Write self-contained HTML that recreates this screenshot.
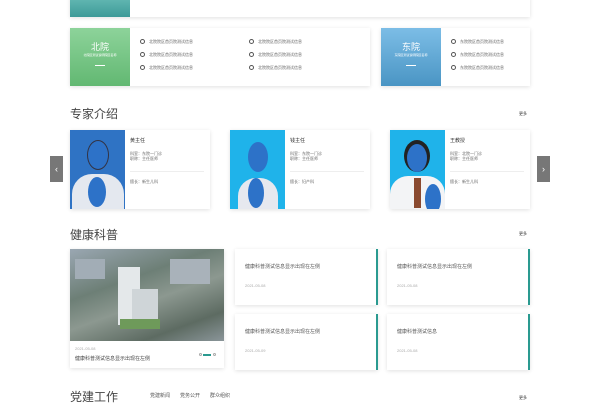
<!DOCTYPE html>
<html><head><meta charset="utf-8"><style>
*{margin:0;padding:0;box-sizing:border-box}
body{width:600px;height:400px;overflow:hidden;background:#fff;font-family:"Liberation Sans","Noto Sans CJK SC",sans-serif;position:relative;color:#333}
.a{position:absolute}
.card{position:absolute;background:#fff;box-shadow:0 1px 4px rgba(0,0,0,.12)}
.t{font-size:4px;color:#666;line-height:5px}
.li{position:absolute;font-size:4px;color:#666}
.li:before{content:"";display:inline-block;width:3px;height:3px;border:1px solid #555;border-radius:50%;margin-right:4px;vertical-align:middle}
h2{position:absolute;font-size:12px;font-weight:normal;color:#444}
.more{position:absolute;font-size:4px;color:#333}
.nc{position:absolute;background:#fff;box-shadow:0 1px 4px rgba(0,0,0,.12);border-right:2px solid #2a9a90}
.nc .x{position:absolute;left:10px;top:14px;font-size:5px;color:#555}
.nc .d{position:absolute;left:10px;top:34px;font-size:4px;color:#aaa}
</style></head><body>
<div class="card" style="left:70px;top:-4px;width:460px;height:21px"></div>
<div class="a" style="left:70px;top:0;width:60px;height:17px;background:linear-gradient(#5fb5b0,#3d9a98)"></div>

<div class="card" style="left:70px;top:28px;width:300px;height:58px"></div>
<div class="a" style="left:70px;top:28px;width:60px;height:58px;background:linear-gradient(#8dd39a,#62b872);color:#fff;text-align:center">
<div style="font-size:9px;margin-top:12px">北院</div><div style="font-size:3px">北院区测试说明院区名称</div><div style="width:10px;height:1px;background:#fff;margin:8px auto 0"></div></div>
<div class="li" style="left:140px;top:39px">北院院区首页院测试信息</div>
<div class="li" style="left:140px;top:52px">北院院区首页院测试信息</div>
<div class="li" style="left:140px;top:65px">北院院区首页院测试信息</div>
<div class="li" style="left:249px;top:39px">北院院区首页院测试信息</div>
<div class="li" style="left:249px;top:52px">北院院区首页院测试信息</div>
<div class="li" style="left:249px;top:65px">北院院区首页院测试信息</div>
<div class="card" style="left:381px;top:28px;width:149px;height:58px"></div>
<div class="a" style="left:381px;top:28px;width:60px;height:58px;background:linear-gradient(#7cbde6,#4a95c4);color:#fff;text-align:center">
<div style="font-size:9px;margin-top:12px">东院</div><div style="font-size:3px">东院区测试说明院区名称</div><div style="width:10px;height:1px;background:#fff;margin:8px auto 0"></div></div>
<div class="li" style="left:451px;top:39px">东院院区首页院测试信息</div>
<div class="li" style="left:451px;top:52px">东院院区首页院测试信息</div>
<div class="li" style="left:451px;top:65px">东院院区首页院测试信息</div>

<h2 style="left:70px;top:105px">专家介绍</h2><div class="more" style="left:519px;top:111px">更多</div>
<div class="a" style="left:50px;top:156px;width:13px;height:26px;background:#777;color:#fff;font-size:9px;text-align:center;line-height:26px">‹</div>
<div class="a" style="left:537px;top:156px;width:13px;height:26px;background:#777;color:#fff;font-size:9px;text-align:center;line-height:26px">›</div>

<div class="card" style="left:70px;top:130px;width:140px;height:79px"></div>
<div class="a" style="left:70px;top:130px;width:55px;height:79px;background:#2f73c4;overflow:hidden">
<div class="a" style="left:2px;top:44px;width:52px;height:40px;background:#e4e8ef;border-radius:20px 20px 0 0"></div>
<div class="a" style="left:17px;top:10px;width:22px;height:30px;background:#2d72c8;border-radius:50%;border:1px solid #334"></div>
<div class="a" style="left:18px;top:47px;width:18px;height:30px;background:#2d72c8;border-radius:50%"></div></div>
<div class="a" style="left:130px;top:137px;font-size:5px">黄主任</div>
<div class="a t" style="left:130px;top:151px">科室：东院一门诊<br>职称：主任医师</div>
<div class="a" style="left:130px;top:171px;width:74px;height:1px;background:#eee"></div>
<div class="a t" style="left:130px;top:179px">擅长：新生儿科</div>

<div class="card" style="left:230px;top:130px;width:140px;height:79px"></div>
<div class="a" style="left:230px;top:130px;width:55px;height:79px;background:#1fb3ea;overflow:hidden">
<div class="a" style="left:8px;top:48px;width:40px;height:40px;background:#e6e8ef;border-radius:18px 18px 0 0"></div>
<div class="a" style="left:18px;top:12px;width:20px;height:30px;background:#2d72c8;border-radius:50%"></div>
<div class="a" style="left:18px;top:48px;width:16px;height:30px;background:#2d72c8;border-radius:50%"></div></div>
<div class="a" style="left:290px;top:137px;font-size:5px">钱主任</div>
<div class="a t" style="left:290px;top:151px">科室：东院一门诊<br>职称：主任医师</div>
<div class="a" style="left:290px;top:171px;width:74px;height:1px;background:#eee"></div>
<div class="a t" style="left:290px;top:179px">擅长：妇产科</div>

<div class="card" style="left:390px;top:130px;width:140px;height:79px"></div>
<div class="a" style="left:390px;top:130px;width:55px;height:79px;background:#1fb3ea;overflow:hidden">
<div class="a" style="left:0;top:46px;width:55px;height:40px;background:#f3f4f6;border-radius:18px 18px 0 0"></div>
<div class="a" style="left:24px;top:48px;width:7px;height:30px;background:#8a4a30"></div>
<div class="a" style="left:14px;top:10px;width:26px;height:32px;background:#222;border-radius:50%"></div>
<div class="a" style="left:17px;top:14px;width:20px;height:28px;background:#2d72c8;border-radius:50%"></div>
<div class="a" style="left:35px;top:54px;width:16px;height:30px;background:#2d72c8;border-radius:50%"></div></div>
<div class="a" style="left:450px;top:137px;font-size:5px">王教授</div>
<div class="a t" style="left:450px;top:151px">科室：北院一门诊<br>职称：主任医师</div>
<div class="a" style="left:450px;top:171px;width:74px;height:1px;background:#eee"></div>
<div class="a t" style="left:450px;top:179px">擅长：新生儿科</div>

<h2 style="left:70px;top:226px">健康科普</h2><div class="more" style="left:519px;top:231px">更多</div>
<div class="card" style="left:70px;top:249px;width:154px;height:119px"></div>
<div class="a" style="left:70px;top:249px;width:154px;height:92px;background:linear-gradient(160deg,#9aa7b2,#6d7f76 35%,#8c9890 55%,#5d6b62 80%,#8a9599);overflow:hidden">
<div class="a" style="left:48px;top:18px;width:22px;height:58px;background:#e4e8ea"></div>
<div class="a" style="left:62px;top:40px;width:26px;height:30px;background:#cfd5d8"></div>
<div class="a" style="left:50px;top:70px;width:40px;height:10px;background:#6e9a5a"></div>
<div class="a" style="left:100px;top:10px;width:40px;height:25px;background:#a9b2ba"></div>
<div class="a" style="left:5px;top:10px;width:30px;height:20px;background:#a2adb6"></div></div>
<div class="a" style="left:75px;top:346px;font-size:4px;color:#aaa">2021-05-08</div>
<div class="a" style="left:75px;top:355px;font-size:5px;color:#444">健康科普测试信息显示出现在左侧</div>
<div class="a" style="left:199px;top:353px;width:3px;height:3px;border:1px solid #aaa;border-radius:50%"></div>
<div class="a" style="left:203px;top:354px;width:8px;height:2px;background:#2a9a90"></div>
<div class="a" style="left:213px;top:353px;width:3px;height:3px;border:1px solid #aaa;border-radius:50%"></div>

<div class="nc" style="left:235px;top:249px;width:143px;height:56px"><div class="x">健康科普测试信息显示出现在左侧</div><div class="d">2021-05-08</div></div>
<div class="nc" style="left:387px;top:249px;width:143px;height:56px"><div class="x">健康科普测试信息显示出现在左侧</div><div class="d">2021-05-08</div></div>
<div class="nc" style="left:235px;top:314px;width:143px;height:56px"><div class="x">健康科普测试信息显示出现在左侧</div><div class="d">2021-05-09</div></div>
<div class="nc" style="left:387px;top:314px;width:143px;height:56px"><div class="x">健康科普测试信息</div><div class="d">2021-05-08</div></div>

<h2 style="left:70px;top:388px">党建工作</h2>
<div class="a" style="left:150px;top:392px;font-size:5px;color:#555">党建新闻</div>
<div class="a" style="left:180px;top:392px;font-size:5px;color:#555">党务公开</div>
<div class="a" style="left:210px;top:392px;font-size:5px;color:#555">群众组织</div>
<div class="more" style="left:519px;top:395px">更多</div>
</body></html>
